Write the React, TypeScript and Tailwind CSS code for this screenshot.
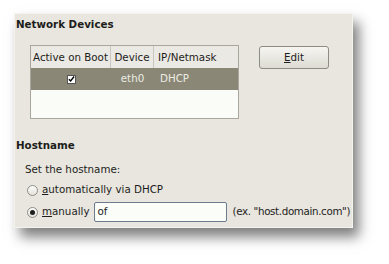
import React from 'react';

const font = { fontFamily: '"DejaVu Sans", "Noto Sans", sans-serif' };

function Radio({ checked }: { checked?: boolean }) {
    return (
        <span className="flex h-[11px] w-[11px] shrink-0 items-center justify-center rounded-full border border-[#8e8d86] bg-gradient-to-b from-[#fdfdfb] to-[#e4e2dc]">
            {checked ? <span className="h-[5px] w-[5px] rounded-full bg-[#1e1e1e]" /> : null}
        </span>
    );
}

export default function App() {
    return (
        <div className="h-[264px] w-[389px] overflow-hidden bg-white pl-[14px] pt-[13px]" style={font}>
            <div className="flex h-[215px] w-[339px] flex-col border border-[#f4f3ee] bg-[#e8e6df] text-[10.3px] text-[#1d1d1b] shadow-[6px_9px_12px_rgba(0,0,0,0.5)]">
                <div className="ml-[1px] mt-[3px] h-[14px] font-bold leading-[14px]">Network Devices</div>
                <div className="mt-[14px] flex">
                    <div className="ml-[15px] flex h-[74px] w-[209px] flex-col border border-[#a8a69d] bg-[#fafcf8]">
                        <div className="flex h-[22px] bg-[#ebe9e3] leading-[22px]">
                            <div className="w-[80px] border-r border-[#c9c7bf] text-center">Active on Boot</div>
                            <div className="w-[43px] border-r border-[#c9c7bf] text-center">Device</div>
                            <div className="pl-[4px]">IP/Netmask</div>
                        </div>
                        <div className="flex h-[22px] items-center bg-[#8a8776] text-[#ecebe4]">
                            <div className="flex w-[80px] justify-center">
                                <span className="flex h-[9px] w-[9px] items-center justify-center border border-[#555] bg-white">
                                    <svg width="8" height="8" viewBox="0 0 8 8">
                                        <path d="M1 4.2 L3 6.3 L7 1.2" fill="none" stroke="#000" strokeWidth="1.6" />
                                    </svg>
                                </span>
                            </div>
                            <div className="w-[43px] text-center">eth0</div>
                            <div className="pl-[6px]">DHCP</div>
                        </div>
                    </div>
                    <button className="ml-[20px] mt-[1px] flex h-[23px] w-[70px] items-center justify-center rounded-[3px] border border-[#8c8b84] bg-gradient-to-b from-[#f6f5f1] to-[#dddbd3] text-[#1d1d1b]">
                        <span>
                            <span className="underline">E</span>dit
                        </span>
                    </button>
                </div>
                <div className="ml-[1px] mt-[19px] h-[14px] font-bold leading-[14px]">Hostname</div>
                <div className="ml-[10px] mt-[10px] h-[14px] leading-[14px]">Set the hostname:</div>
                <div className="ml-[12px] mt-[7px] flex h-[14px] items-center gap-[4px]">
                    <Radio />
                    <span>
                        <span className="underline">a</span>utomatically via DHCP
                    </span>
                </div>
                <div className="ml-[12px] mt-[5px] flex items-center whitespace-nowrap">
                    <Radio checked />
                    <span className="ml-[4px]">
                        <span className="underline">m</span>anually
                    </span>
                    <div className="ml-[4px] flex h-[20px] w-[133px] shrink-0 items-center rounded-[2px] border border-[#6c7d8e] bg-[#fbfdf9] pl-[3px]">
                        of
                    </div>
                    <span className="ml-[6px] tracking-[-0.35px]">(ex. "host.domain.com")</span>
                </div>
            </div>
        </div>
    );
}
